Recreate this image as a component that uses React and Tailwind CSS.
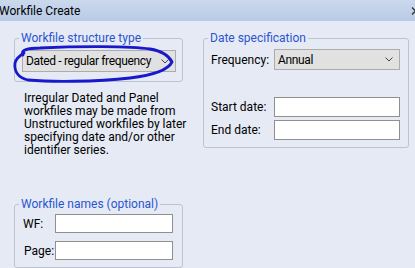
import React from 'react';

const font = "font-['Roboto','Liberation_Sans',sans-serif]";

const Chevron = () => (
  <svg width="8" height="5" viewBox="0 0 8 5" className="shrink-0">
    <path d="M0.5 0.5 L4 4 L7.5 0.5" fill="none" stroke="#444" strokeWidth="1" />
  </svg>
);

const Select = ({ value, className }) => (
  <div className={`flex items-center justify-between border border-[#acacac] bg-[#e1e1e1] pl-[3px] pr-[6px] ${className}`}>
    <span className="tracking-[-0.35px]">{value}</span>
    <Chevron />
  </div>
);

const Input = ({ className }) => (
  <div className={`border border-[#8f8f8f] bg-white ${className}`} />
);

export default function App() {
  return (
    <div className={`relative w-[415px] h-[268px] overflow-hidden flex flex-col bg-[#e5eaf4] text-[12px] text-black ${font}`}>
      {/* title bar */}
      <div className="h-[21px] shrink-0 flex items-center justify-between bg-gradient-to-b from-[#cbd9ed] to-[#b8cae5]">
        <span className="-ml-[1px] leading-[14px]">Workfile Create</span>
        <svg width="9" height="8" viewBox="0 0 9 8" className="-mr-[5px]">
          <path d="M1 0.5 L8 7.5 M8 0.5 L1 7.5" stroke="#333" strokeWidth="1.3" />
        </svg>
      </div>

      <div className="flex-1 flex pl-[14px] gap-[20px]">
        {/* left column */}
        <div className="w-[169px] flex flex-col">
          <fieldset className="mt-[10px] border border-[#bcc4d2] rounded-[3px] pl-[7px] pr-[6px] pb-[9px]">
            <legend className="-ml-[3px] px-[2px] leading-[14px] text-[#2b55d0]">Workfile structure type</legend>
            <Select value="Dated - regular frequency" className="mt-[5px] h-[22px]" />
          </fieldset>

          <p className="mt-[10px] pl-[10px] leading-[13px] whitespace-nowrap">
            Irregular Dated and Panel<br />
            workfiles may be made from<br />
            Unstructured workfiles by later<br />
            specifying date and/or other<br />
            identifier series.
          </p>

          <fieldset className="mt-auto border border-[#bcc4d2] rounded-[3px] pl-[7px] pr-[9px] pb-[7px]">
            <legend className="-ml-[3px] px-[2px] leading-[14px] text-[#2b55d0]">Workfile names (optional)</legend>
            <div className="mt-[3px] flex items-center">
              <span className="w-[33px] pl-[1px]">WF:</span>
              <Input className="flex-1 h-[19px]" />
            </div>
            <div className="mt-[8px] flex items-center">
              <span className="w-[33px] pl-[2px]">Page:</span>
              <Input className="flex-1 h-[19px]" />
            </div>
          </fieldset>
        </div>

        {/* right column */}
        <div className="w-[206px]">
          <fieldset className="mt-[10px] border border-[#bcc4d2] rounded-[3px] pl-[7px] pr-[8px] pb-[7px]">
            <legend className="-ml-[3px] px-[2px] leading-[14px] text-[#2b55d0]">Date specification</legend>
            <div className="mt-[4px] flex items-center">
              <span className="w-[63px]">Frequency:</span>
              <Select value="Annual" className="flex-1 h-[21px]" />
            </div>
            <div className="mt-[27px] flex items-center">
              <span className="w-[63px]">Start date:</span>
              <Input className="flex-1 h-[20px]" />
            </div>
            <div className="mt-[3px] flex items-center">
              <span className="w-[63px]">End date:</span>
              <Input className="flex-1 h-[20px]" />
            </div>
          </fieldset>
        </div>
      </div>

      {/* hand-drawn annotation */}
      <svg className="absolute inset-0 pointer-events-none" width="415" height="268" viewBox="0 0 415 268">
        <path
          d="M23 55 C20 50 28 48 40 48 C80 46 130 46 150 49 C162 51 169 56 172 62 C168 70 155 75 130 78 C95 82 50 82 28 80 C18 78 14 71 15 63 C16 59 19 56 24 53"
          fill="none"
          stroke="#1818cc"
          strokeWidth="2.8"
          strokeLinecap="round"
        />
      </svg>
    </div>
  );
}
